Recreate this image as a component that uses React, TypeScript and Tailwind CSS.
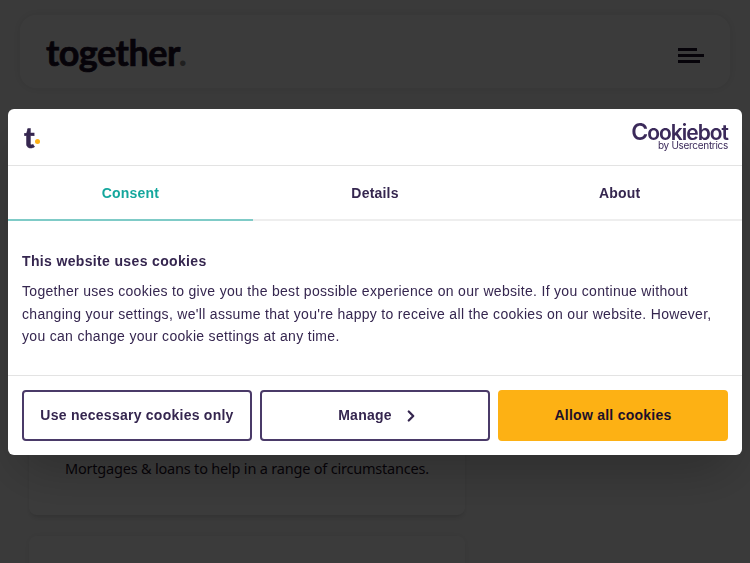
import { ChevronRight } from 'lucide-react';

const sans = "font-['Liberation_Sans',Arial,sans-serif]";

function PageBehind() {
  return (
    <div className="h-[563px] overflow-hidden bg-[#fbfbfb] px-[29px] pt-[15px]">
      <header className="-mx-[9px] flex h-[73px] items-center justify-between rounded-2xl bg-white pl-[26px] pr-[26px] shadow-[0_0_12px_rgba(0,0,0,0.1)]">
        <span className="font-['Lato',sans-serif] text-[36px] font-bold leading-none tracking-[-0.5px] text-[#1d1029] [-webkit-text-stroke:0.7px_#1d1029]">
          together<span className="text-[#8a8a8a] [-webkit-text-stroke:0px]">.</span>
        </span>
        <div className="mt-[7px] flex flex-col items-start gap-[3px]">
          <span className="h-[3px] w-[19px] bg-[#1d1029]" />
          <span className="h-[3px] w-[26px] bg-[#1d1029]" />
          <span className="h-[3px] w-[22px] bg-[#1d1029]" />
        </div>
      </header>
      <section className="mt-[27px] flex h-[400px] w-[436px] flex-col justify-end rounded-lg bg-white px-9 pb-[35px] shadow-md">
        <p className="whitespace-nowrap font-['Noto_Sans',sans-serif] text-[14.5px] leading-6 tracking-[-0.2px] text-[#1d1029]">
          Mortgages &amp; loans to help in a range of circumstances.
        </p>
      </section>
      <section className="mt-[21px] h-[100px] w-[436px] rounded-lg bg-white shadow-[0_0_8px_rgba(0,0,0,0.08)]" />
    </div>
  );
}

function Tab({ label, active }: { label: string; active?: boolean }) {
  return (
    <div
      className={`flex h-[55px] flex-1 items-center justify-center border-b-2 pt-[2px] text-[14px] font-bold tracking-[0.2px] ${
        active ? 'border-[#7fcbc7] text-[#14a79d]' : 'border-[#eeeeee] text-[#35264f]'
      }`}
    >
      {label}
    </div>
  );
}

function ConsentDialog() {
  return (
    <div className={`fixed left-2 top-[109px] w-[734px] rounded-md bg-white text-[#35264f] shadow-2xl ${sans}`}>
      <div className="flex h-[57px] items-center justify-between border-b border-[#e3e3e3] pl-4 pr-[14px]">
        <span className="relative font-['Lato',sans-serif] text-[28px] font-black leading-none text-[#35264f] [-webkit-text-stroke:0.5px_#35264f]">
          t
          <span className="absolute -right-[5px] bottom-[7px] h-[5px] w-[5px] rounded-full bg-[#fdb114]" />
        </span>
        <div className="flex flex-col items-end pb-[2px] font-['Inter',sans-serif] text-[#3b2a5a]">
          <span className="text-[21px] font-semibold leading-[19px] tracking-[-1px]">
            <span className="text-[23px] leading-[19px]">C</span>ookiebot
          </span>
          <span className="-mt-[2px] text-[10px] leading-[10px] tracking-[-0.3px]">by Usercentrics</span>
        </div>
      </div>

      <div className="flex">
        <Tab label="Consent" active />
        <Tab label="Details" />
        <Tab label="About" />
      </div>

      <div className="h-[155px] border-b border-[#e3e3e3] px-[14px] pt-[29px]">
        <h2 className="text-[14px] font-bold leading-[22px] tracking-[0.35px]">This website uses cookies</h2>
        <p className="mt-[8px] text-[14px] leading-[22.5px] tracking-[0.31px]">
          Together uses cookies to give you the best possible experience on our website. If you continue without changing your settings, we'll assume that you're happy to receive all the cookies on our website. However, you can change your cookie settings at any time.
        </p>
      </div>

      <div className="grid grid-cols-3 gap-2 p-[14px]">
        <button className="flex h-[51px] items-center justify-center rounded border-2 border-[#4a3a68] text-[14px] font-bold tracking-[0.25px]">
          Use necessary cookies only
        </button>
        <button className="flex h-[51px] items-center justify-center gap-[10px] rounded border-2 border-[#4a3a68] pl-2 text-[14px] font-bold tracking-[0.25px]">
          Manage
          <ChevronRight className="h-[18px] w-[18px]" strokeWidth={3} />
        </button>
        <button className="flex h-[51px] items-center justify-center rounded border-2 border-[#fdb114] bg-[#fdb114] text-[14px] font-bold tracking-[0.25px] text-[#1d1029]">
          Allow all cookies
        </button>
      </div>
    </div>
  );
}

export default function App() {
  return (
    <div className="relative h-[563px] overflow-hidden">
      <PageBehind />
      <div className="fixed inset-0 bg-[rgba(0,0,0,0.77)]" />
      <ConsentDialog />
    </div>
  );
}
